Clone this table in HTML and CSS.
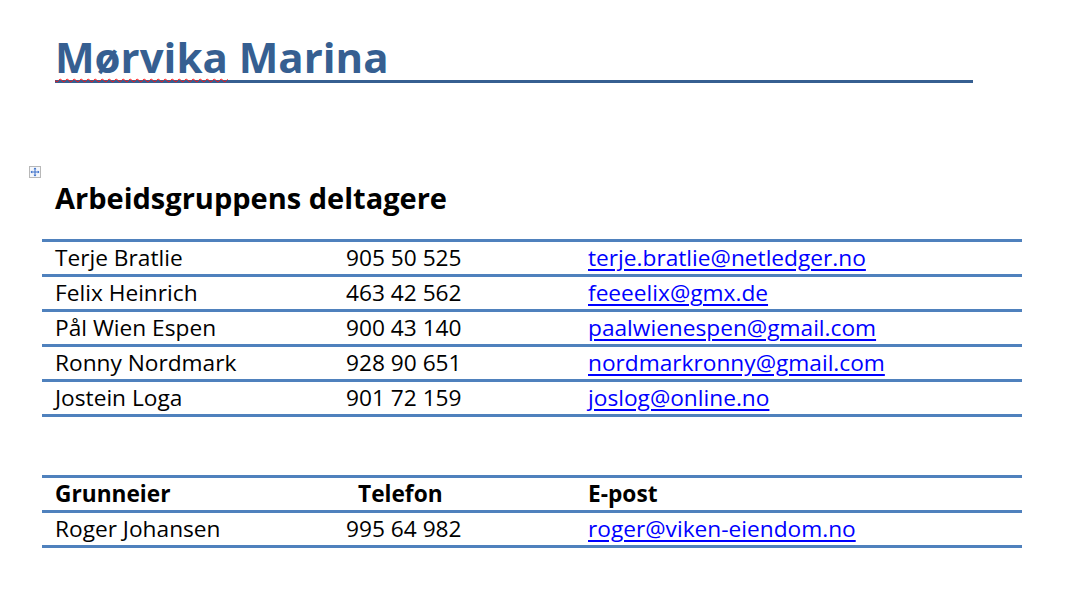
FILE: index.html
```html
<!DOCTYPE html>
<html lang="no">
<head>
<meta charset="utf-8">
<title>Mørvika Marina</title>
<link rel="stylesheet" href="styles.css">
</head>
<body>
<div class="page">
  <h1 class="title"><span class="misspelled">Mørvika</span> Marina</h1>

  <section class="group">
    <span class="move-handle" aria-hidden="true">
      <svg width="10" height="10" viewBox="0 0 10 10">
        <path d="M5 1v8M1 5h8" stroke="#3b6fc9" stroke-width="1" fill="none"/>
        <path d="M5 0.5L3.5 2.2h3zM5 9.5L3.5 7.8h3zM0.5 5L2.2 3.5v3zM9.5 5L7.8 3.5v3z" fill="#3b6fc9"/>
      </svg>
    </span>
    <h2 class="group-title">Arbeidsgruppens deltagere</h2>
    <div class="rows">
      <div class="row"><span>Terje Bratlie</span><span>905 50 525</span><a href="#">terje.bratlie@netledger.no</a></div>
      <div class="row"><span>Felix Heinrich</span><span>463 42 562</span><a href="#">feeeelix@gmx.de</a></div>
      <div class="row"><span>Pål Wien Espen</span><span>900 43 140</span><a href="#">paalwienespen@gmail.com</a></div>
      <div class="row"><span>Ronny Nordmark</span><span>928 90 651</span><a href="#">nordmarkronny@gmail.com</a></div>
      <div class="row"><span>Jostein Loga</span><span>901 72 159</span><a href="#">joslog@online.no</a></div>
    </div>
  </section>

  <section class="owners">
    <div class="rows">
      <div class="row head"><span>Grunneier</span><span class="indent">Telefon</span><span>E-post</span></div>
      <div class="row"><span>Roger Johansen</span><span>995 64 982</span><a href="#">roger@viken-eiendom.no</a></div>
    </div>
    <span class="resize-handle" aria-hidden="true"></span>
  </section>
</div>
</body>
</html>
```

FILE: styles.css
```css
html, body {
  margin: 0;
  padding: 0;
  background: #ffffff;
}

body {
  font-family: "Open Sans", "Liberation Sans", sans-serif;
  color: #000000;
}

.page {
  padding-top: 33px;
  width: 1084px;
}

.title {
  margin: 0 0 0 55px;
  width: 918px;
  font-size: 42px;
  line-height: 47px;
  font-weight: 700;
  color: #365f91;
  border-bottom: 3px solid #365f91;
  white-space: nowrap;
}

.misspelled {
  text-decoration: underline wavy #ff1010;
  text-decoration-thickness: 1.2px;
  text-underline-offset: 5px;
  text-decoration-skip-ink: none;
}

.group {
  position: relative;
  margin: 83px 0 0 42px;
  width: 980px;
}

.move-handle {
  position: absolute;
  left: -13px;
  top: 0;
  width: 12px;
  height: 12px;
  box-sizing: border-box;
  border: 1px solid #b8b8b8;
  background: #f4f7fc;
  display: flex;
  align-items: center;
  justify-content: center;
}

.group-title {
  margin: 0;
  padding: 12px 0 21px 13px;
  font-size: 29px;
  line-height: 40px;
  font-weight: 700;
  white-space: nowrap;
}

.rows {
  border-bottom: 3px solid #4f81bd;
}

.row {
  display: grid;
  grid-template-columns: 291px 242px 1fr;
  border-top: 3px solid #4f81bd;
  font-size: 22.7px;
  line-height: 30px;
  padding-top: 1px;
  padding-bottom: 1px;
  white-space: nowrap;
}

.row > * {
  padding-left: 13px;
}

.row a {
  color: #0000ff;
  text-decoration: underline;
  text-decoration-thickness: 2px;
  text-underline-offset: 3px;
  justify-self: start;
  margin-left: 13px;
  padding-left: 0;
}

.row.head {
  font-weight: 700;
}

.indent {
  padding-left: 25px;
}

.owners {
  position: relative;
  margin: 58px 0 0 42px;
  width: 980px;
}

.resize-handle {
  position: absolute;
  right: -5px;
  bottom: -7px;
  width: 6px;
  height: 6px;
  box-sizing: border-box;
  border: 1px solid #8c8c8c;
  background: #ffffff;
}
```
